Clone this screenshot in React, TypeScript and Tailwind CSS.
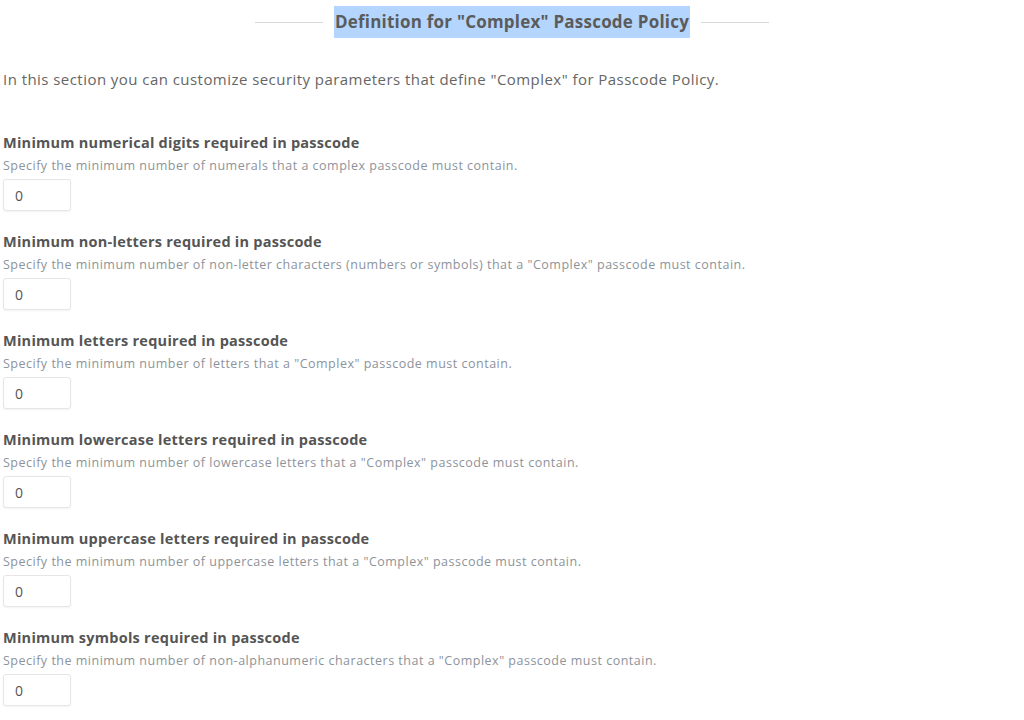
const fields = [
  {
    title: 'Minimum numerical digits required in passcode',
    hint: 'Specify the minimum number of numerals that a complex passcode must contain.',
  },
  {
    title: 'Minimum non-letters required in passcode',
    hint: 'Specify the minimum number of non-letter characters (numbers or symbols) that a "Complex" passcode must contain.',
  },
  {
    title: 'Minimum letters required in passcode',
    hint: 'Specify the minimum number of letters that a "Complex" passcode must contain.',
  },
  {
    title: 'Minimum lowercase letters required in passcode',
    hint: 'Specify the minimum number of lowercase letters that a "Complex" passcode must contain.',
  },
  {
    title: 'Minimum uppercase letters required in passcode',
    hint: 'Specify the minimum number of uppercase letters that a "Complex" passcode must contain.',
  },
  {
    title: 'Minimum symbols required in passcode',
    hint: 'Specify the minimum number of non-alphanumeric characters that a "Complex" passcode must contain.',
  },
];

const App = () => {
  return (
    <div className="min-h-screen bg-white px-[3px] font-['Open_Sans',sans-serif]">
      {/* section header */}
      <div className="flex items-center justify-center pt-[6px]">
        <div className="h-px w-[68px] bg-[#d9d9d9]" />
        <h2 className="mx-[11px] bg-[#b4d5fd] px-[1px] text-[17px] leading-[32px] font-bold tracking-[0.22px] text-[#5b5b5b]">
          Definition for "Complex" Passcode Policy
        </h2>
        <div className="h-px w-[68px] bg-[#d9d9d9]" />
      </div>

      <p className="mt-[30px] text-[15px] leading-[22px] tracking-[0.45px] text-[#666]">
        In this section you can customize security parameters that define "Complex" for Passcode Policy.
      </p>

      <div className="mt-[43px] flex flex-col gap-[21px]">
        {fields.map((f) => (
          <div key={f.title}>
            <h3 className="text-[14.5px] leading-[20px] font-bold tracking-[0.25px] text-[#555]">{f.title}</h3>
            <p className="mt-[4px] text-[12.5px] leading-[17px] tracking-[0.5px] text-[#8d939b]">{f.hint}</p>
            <input
              type="text"
              defaultValue="0"
              className="mt-[5px] h-[32px] w-[68px] rounded-[3px] border border-[#e6e6e6] bg-white px-[11px] text-[14px] text-[#555] shadow-[0_1px_2px_rgba(0,0,0,0.05)] focus:outline-none"
            />
          </div>
        ))}
      </div>
    </div>
  );
};

export default App;
